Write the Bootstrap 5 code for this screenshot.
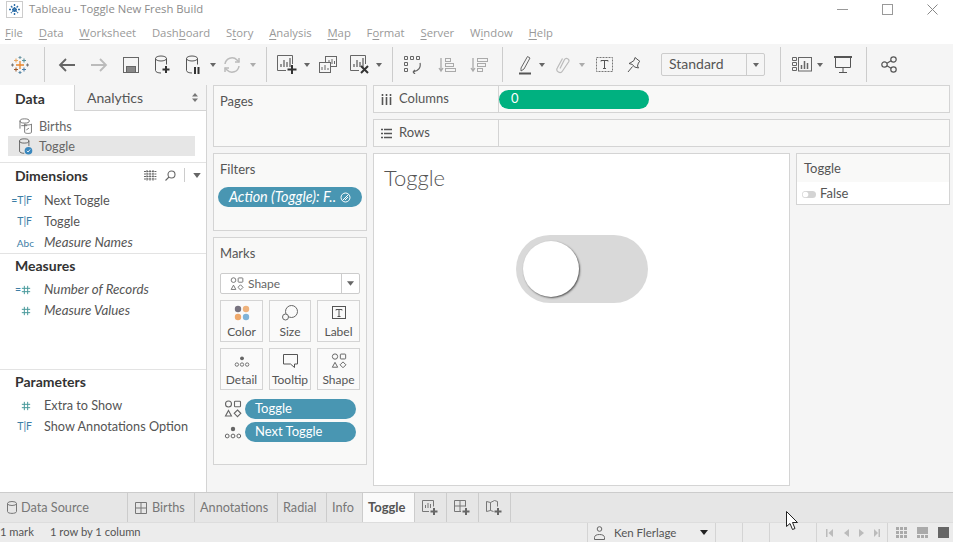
<!DOCTYPE html>
<html lang="en">
<head>
  <meta charset="UTF-8">
  <meta name="viewport" content="width=device-width, initial-scale=1.0">
  <title>Tableau - Toggle New Fresh Build</title>
  <link href="https://cdn.jsdelivr.net/npm/bootstrap@5.3.2/dist/css/bootstrap.min.css" rel="stylesheet">
  <style>
    html, body { height: 100%; }
    body {
      font-family: "Lato", "Liberation Sans", sans-serif;
      font-size: 12.7px;
      color: #555;
      background: #f5f5f5;
      overflow: hidden;
      height: 542px;
      position: relative;
    }
    svg { display: block; }

    .win-title { height: 22px; background: #fff; padding: 0 0 3px 6px; }
    .win-title-text { font-family: "Open Sans", sans-serif; font-size: 11.3px; color: #8c8c8c; margin-left: 6px; }
    .win-btns { margin-left: auto; margin-right: -2px; }
    .win-btn { width: 45px; height: 16px; }
    .menu-bar { height: 22px; background: #fff; padding: 1px 0 0 5px; font-family: "Open Sans", sans-serif; font-size: 11.3px; color: #999; gap: 15.8px; }
    .menu-bar u { text-underline-offset: 2px; }

    .tool-bar { height: 41px; background: #f5f5f5; }
    .tb { height: 41px; flex: none; }
    .w6 { width: 6px; } .w8 { width: 8px; } .w22 { width: 22px; } .w26 { width: 26px; } .w28 { width: 28px; }
    .w30 { width: 30px; } .w32 { width: 32px; } .w34 { width: 34px; } .w36 { width: 36px; } .w38 { width: 38px; }
    .w40 { width: 40px; } .w12 { width: 12px; } .w16 { width: 16px; }
    .tb-sep { width: 1px; height: 35px; background: #ccc; flex: none; }
    .sa { margin-left: 4px; margin-right: 6px; }
    .sb { margin-left: 5px; margin-right: 4px; }
    .sc { margin-left: 9px; margin-right: 4px; }
    .sd { margin-left: 9px; margin-right: 8px; }
    .se { margin-left: 15px; margin-right: 6px; }
    .sf { margin-left: 3px; margin-right: 6px; }
    .fit-select { width: 104px; height: 23px; margin-left: 16px; background: #f5f5f5; border: 1px solid #ccc; border-radius: 2px; font-size: 14px; color: #555; flex: none; }
    .fit-select span { flex: 1; padding: 0 0 2px 7px; }
    .fit-arrow { width: 18px; height: 21px; border-left: 1px solid #ccc; }

    .work-area { height: 407px; }
    .side-panel { width: 207px; background: #fff; border-right: 1px solid #d4d4d4; flex: none; }
    .side-tabs { height: 26px; }
    .tab-data { width: 74px; padding-left: 15px; font-weight: 700; font-size: 14px; color: #333; }
    .tab-analytics { flex: 1; padding-left: 12px; font-size: 14px; background: #f5f5f5; border-left: 1px solid #d4d4d4; border-bottom: 1px solid #d4d4d4; color: #555; }
    .tab-updown { margin-left: auto; margin-right: 8px; }
    .data-list { padding: 5px 11px 0 8px; border-bottom: 1px solid #e3e3e3; box-sizing: content-box; height: 46px; }
    .ds-row { height: 20px; padding: 1px 0 0 9px; gap: 5px; color: #666; }
    .ds-on { background: #e6e6e6; }
    .dim-sec { height: 91px; border-bottom: 1px solid #e3e3e3; }
    .mea-sec { height: 116px; border-bottom: 1px solid #e3e3e3; }
    .sec-head { height: 27px; padding: 0 0 3px 15px; font-size: 14px; font-weight: 700; color: #333; }
    .sec-head-sm { height: 25px; }
    .sec-tools { margin-left: auto; margin-right: 5px; gap: 8px; }
    .sec-rule { width: 1px; height: 14px; background: #ccc; }
    .fld { height: 21px; color: #555; }
    .fld-ic { width: 44px; flex: none; padding-right: 12px; font-size: 10.5px; color: #3d7ea6; line-height: 1; }
    .fld-ic.abc { font-size: 10px; padding-right: 10px; }
    .fld-hash { padding-right: 13px; }
    .fld-it { font-style: italic; font-size: 13.3px; }

    .shelf-col { width: 154px; margin-left: 6px; flex: none; }
    .sh-card { background: #f9f9f8; border: 1px solid #d4d4d4; padding: 7px 6px 0 6px; color: #555; font-size: 13px; }
    .sh-pages { height: 62px; margin-bottom: 6px; }
    .sh-filters { height: 78px; margin-bottom: 6px; }
    .sh-marks { height: 228px; }
    .sh-title { height: 16px; line-height: 16px; }
    .sh-pill { height: 20px; border-radius: 10px; background: #4996b2; color: #fff; padding-left: 10px; }
    .pill-filter { margin: 10px -2px 0 -2px; font-style: italic; font-size: 14.400px; padding-left: 11px; }
    .pill-filter svg { margin-left: auto; margin-right: 11px; }
    .marks-sel { height: 21px; margin: 12px 0 6px 0; background: #fff; border: 1px solid #ccc; border-radius: 2px; font-size: 12px; color: #666; }
    .marks-sel svg { margin-left: 9px; }
    .marks-sel span { margin-left: 4px; }
    .marks-arrow { margin-left: auto; width: 18px; height: 19px; border-left: 1px solid #ccc; }
    .marks-arrow svg { margin-left: 0; }
    .marks-grid { display: grid; grid-template-columns: 43px 42px 43px; column-gap: 6px; row-gap: 6px; }
    .mk-btn { height: 42px; background: #fafafa; border: 1px solid #d4d4d4; font-size: 12px; color: #555; padding-top: 3px; }
    .mk-ic { height: 22px; }
    .mk-lines { margin-top: 9px; gap: 3px; }
    .mk-line { gap: 2px; }
    .mk-line svg { flex: none; width: 18px; margin-left: 4px; margin-right: 1px; }
    .mk-line .sh-pill { width: 111px; }

    .main-col { flex: 1; margin-left: 6px; margin-right: 3px; min-width: 0; font-size: 13px; }
    .shelf-row { height: 28px; margin-bottom: 6px; background: #f9f9f8; border: 1px solid #d4d4d4; }
    .shelf-name { width: 125px; padding-left: 7px; gap: 7px; border-right: 1px solid #d4d4d4; height: 100%; flex: none; }
    .pill-col { width: 150px; height: 19px; border-radius: 10px; background: #00b180; color: #fff; padding-left: 12px; }
    .view-row { gap: 6px; height: 333px; }
    .view-box { width: 417px; background: #fff; border: 1px solid #d4d4d4; flex: none; }
    .view-title { font-size: 22px; font-weight: 300; color: #555; padding: 11px 0 0 10px; line-height: 26px; }
    .tg-track { width: 132px; height: 68px; border-radius: 34px; background: #d9d9d9; margin: 44px 0 0 142px; padding: 6px 7px; }
    .tg-knob { width: 56px; height: 56px; border-radius: 50%; background: #fff; box-shadow: 1px 1px 2px #555; }
    .legend-box { width: 154px; height: 52px; background: #f9f9f8; border: 1px solid #d4d4d4; flex: none; }
    .legend-head { height: 28px; padding: 2px 0 0 7px; }
    .legend-item { height: 22px; background: #fff; padding: 2px 0 0 5px; gap: 4px; }

    .tab-strip { height: 30px; background: #e6e6e6; border-top: 1px solid #ccc; color: #777; }
    .sheet-tab { height: 29px; border-right: 1px solid #ccc; padding: 0 0 0 5px; gap: 5px; flex: none; }
    .t-ds { width: 128px; padding-left: 7px; gap: 4px; } .t-bi { width: 67px; padding-left: 7px; } .t-an { width: 83px; } .t-ra { width: 49px; }
    .t-in { width: 36px; } .t-to { width: 52px; background: #fafafa; color: #555; font-weight: 700; font-size: 13px; }
    .t-new { width: 32px; padding: 0; }
    .status-bar { height: 20px; background: #ececec; border-top: 1px solid #ddd; color: #555; font-size: 11.200px; }
    .st-mark { width: 50px; }
    .st-user { margin-left: auto; width: 129px; height: 100%; border-left: 1px solid #d4d4d4; border-right: 1px solid #d4d4d4; padding-left: 6px; gap: 9px; font-size: 11.500px; flex: none; }
    .st-user svg:last-child { margin-left: auto; margin-right: 7px; }
    .st-cell { width: 27px; height: 100%; border-right: 1px solid #d4d4d4; flex: none; }
    .st-wide { width: 47px; }
    .st-nav { width: 71px; height: 100%; border-right: 1px solid #d4d4d4; padding-left: 9px; flex: none; }
    .st-views { width: 65px; padding-left: 8px; gap: 10px; flex: none; }
    .mouse-ptr { position: absolute; left: 786px; top: 511px; }
  </style>
</head>
<body>
  <svg width="0" height="0" class="position-absolute">
    <defs>
      <symbol id="i-shape" viewBox="0 0 18 18">
        <circle cx="4.5" cy="4" r="3" fill="none" stroke="#666" stroke-width="1.1"/>
        <rect x="10.5" y="1.2" width="6" height="5.5" rx=".8" fill="none" stroke="#666" stroke-width="1.1"/>
        <path d="M4.5 10.5l3 5.5h-6z" fill="none" stroke="#666" stroke-width="1.1"/>
        <path d="M13.5 10l3.3 3.3-3.3 3.3-3.3-3.3z" fill="none" stroke="#666" stroke-width="1.1"/>
      </symbol>
      <symbol id="i-detail" viewBox="0 0 18 18">
        <circle cx="9" cy="6" r="2.2" fill="#666"/>
        <circle cx="3.2" cy="13" r="1.9" fill="none" stroke="#666"/>
        <circle cx="9" cy="13" r="1.9" fill="none" stroke="#666"/>
        <circle cx="14.8" cy="13" r="1.9" fill="none" stroke="#666"/>
      </symbol>
      <symbol id="i-hash" viewBox="0 0 12 12">
        <path d="M4 1v10M8 1v10M1 4h10M1 8h10" stroke="#4a9a9c" stroke-width="1.2" fill="none"/>
      </symbol>
      <symbol id="i-caret" viewBox="0 0 6 4"><path d="M0 0h6L3 4z" fill="#666"/></symbol>
      <symbol id="i-cyl" viewBox="0 0 16 20">
        <ellipse cx="7" cy="3.5" rx="5.5" ry="2.5" fill="none" stroke="#555"/>
        <path d="M1.5 3.5v12c0 1.5 2.500 2.500 5.500 2.500M12.500 3.500v6" fill="none" stroke="#555"/>
      </symbol>
    </defs>
  </svg>

  <header class="win-title d-flex align-items-center">
    <svg width="17" height="17" viewBox="0 0 17 17"><rect x=".5" y=".5" width="16" height="16" fill="#fff" stroke="#ccc"/><path d="M8.500 3v11M3 8.500h11M5 5l7 7M12 5l-7 7" stroke="#2f6fa8" stroke-width="1.4" stroke-dasharray="2 1"/></svg>
    <span class="win-title-text">Tableau - Toggle New Fresh Build</span>
    <div class="win-btns d-flex">
      <div class="win-btn d-flex align-items-center justify-content-center"><svg width="11" height="11"><path d="M0 5.500h11" stroke="#999"/></svg></div>
      <div class="win-btn d-flex align-items-center justify-content-center"><svg width="11" height="11"><rect x=".5" y=".5" width="10" height="10" fill="none" stroke="#999"/></svg></div>
      <div class="win-btn d-flex align-items-center justify-content-center"><svg width="11" height="11"><path d="M.5.500l10 10M10.500.500l-10 10" stroke="#888"/></svg></div>
    </div>
  </header>

  <nav class="menu-bar d-flex align-items-center">
    <span><u>F</u>ile</span><span><u>D</u>ata</span><span><u>W</u>orksheet</span><span>Dash<u>b</u>oard</span><span>S<u>t</u>ory</span><span><u>A</u>nalysis</span><span><u>M</u>ap</span><span>F<u>o</u>rmat</span><span><u>S</u>erver</span><span>W<u>i</u>ndow</span><span><u>H</u>elp</span>
  </nav>

  <div class="tool-bar d-flex align-items-center">
    <div class="tb w40 d-flex align-items-center justify-content-center">
      <svg width="18" height="18" viewBox="0 0 18 18" fill="none" stroke-width="1.100">
        <path d="M9 5v8M5 9h8" stroke="#e8862c" stroke-width="1.300"/><path d="M5 2.500v4M3 4.500h4" stroke="#e9a55c"/><path d="M13 2.500v4M11 4.500h4" stroke="#59939b"/>
        <path d="M5 11.500v4M3 13.500h4" stroke="#9c5a2c"/><path d="M13 11.500v4M11 13.500h4" stroke="#4d7ea8"/>
        <path d="M9 0v3M7.500 1.500h3" stroke="#7099a6"/><path d="M9 15v3M7.500 16.500h3" stroke="#5a8aa8"/>
        <path d="M0 9h3M1.500 7.500v3" stroke="#777"/><path d="M15 9h3M16.500 7.500v3" stroke="#777"/>
      </svg>
    </div>
    <div class="tb-sep sa"></div>
    <div class="tb w32 d-flex align-items-center justify-content-center"><svg width="18" height="14" viewBox="0 0 18 14" fill="none" stroke="#666" stroke-width="1.800"><path d="M17 7H2M8 1L2 7l6 6"/></svg></div>
    <div class="tb w32 d-flex align-items-center justify-content-center"><svg width="18" height="14" viewBox="0 0 18 14" fill="none" stroke="#bbb" stroke-width="1.800"><path d="M1 7h15M10 1l6 6-6 6"/></svg></div>
    <div class="tb w32 d-flex align-items-center justify-content-center"><svg width="16" height="16" viewBox="0 0 16 16" fill="none" stroke="#666"><rect x=".5" y=".5" width="15" height="15"/><rect x="3.500" y="9.500" width="9" height="6" fill="#888"/></svg></div>
    <div class="tb w32 d-flex align-items-center justify-content-center"><svg width="18" height="20" viewBox="0 0 18 20"><use href="#i-cyl" width="16" height="20"/><path d="M12 11v7M8.500 14.500h7" stroke="#333" stroke-width="2"/></svg></div>
    <div class="tb w28 d-flex align-items-center justify-content-center"><svg width="16" height="20" viewBox="0 0 16 20"><use href="#i-cyl" width="16" height="20"/><path d="M10 12v7M13.500 12v7" stroke="#333" stroke-width="2"/></svg></div>
    <div class="tb w12 d-flex align-items-center justify-content-center"><svg width="6" height="4"><use href="#i-caret"/></svg></div>
    <div class="tb w26 d-flex align-items-center justify-content-center"><svg width="18" height="18" viewBox="0 0 18 18" fill="none" stroke="#bbb" stroke-width="1.500"><path d="M2 8a7 7 0 0 1 12-4l2 2M16 10a7 7 0 0 1-12 4l-2-2"/><path d="M16 2v4h-4M2 16v-4h4"/></svg></div>
    <div class="tb w16 d-flex align-items-center justify-content-center"><svg width="6" height="4" opacity=".5"><use href="#i-caret"/></svg></div>
    <div class="tb-sep sb"></div>
    <div class="tb w32 d-flex align-items-center justify-content-center"><svg width="20" height="20" viewBox="0 0 20 20" fill="none" stroke="#666"><path d="M15.500 9V.5H.5v15H9"/><path d="M4 12V9M7 12V5M10 12V7M13 12V3" stroke-width="1.300"/><path d="M15 10v9M10.500 14.500h9" stroke="#333" stroke-width="2"/></svg></div>
    <div class="tb w8 d-flex align-items-center justify-content-center"><svg width="6" height="4"><use href="#i-caret"/></svg></div>
    <div class="tb w34 d-flex align-items-center justify-content-center"><svg width="18" height="17" viewBox="0 0 18 17" fill="none" stroke="#666"><rect x="6.500" y=".5" width="11" height="10" fill="#f5f5f5"/><rect x=".5" y="6.500" width="11" height="10" fill="#f5f5f5"/><path d="M3 14v-3M6 14V9M9 14v-2M10 6V4M13 8V3M15.500 8V5"/></svg></div>
    <div class="tb w30 d-flex align-items-center justify-content-center"><svg width="20" height="20" viewBox="0 0 20 20" fill="none" stroke="#666"><path d="M15.500 9V.5H.5v15H9"/><path d="M4 12V9M7 12V5M10 12V7M13 12V3" stroke-width="1.300"/><path d="M11 11l7 7M18 11l-7 7" stroke="#333" stroke-width="2"/></svg></div>
    <div class="tb w8 d-flex align-items-center justify-content-center"><svg width="6" height="4"><use href="#i-caret"/></svg></div>
    <div class="tb-sep sc"></div>
    <div class="tb w32 d-flex align-items-center justify-content-center"><svg width="18" height="18" viewBox="0 0 18 18" fill="none" stroke="#666"><path d="M.5.500h3v3h-3zM6.500.500h3v3h-3zM12.500.500h3v3h-3zM.5 6.500h3v3h-3zM.5 12.500h3v3h-3z"/><path d="M16 7c1 4-1 8-7 9M9 16l2-2M9 16l2 2" stroke-width="1.200"/></svg></div>
    <div class="tb w36 d-flex align-items-center justify-content-center"><svg width="18" height="16" viewBox="0 0 18 16" fill="none" stroke="#aaa"><path d="M3 1v13M1 11l2 3 2-3" stroke-width="1.300"/><rect x="7.500" y="1.500" width="5" height="3"/><rect x="7.500" y="6.500" width="8" height="3"/><rect x="7.500" y="11.500" width="10" height="3"/></svg></div>
    <div class="tb w28 d-flex align-items-center justify-content-center"><svg width="18" height="16" viewBox="0 0 18 16" fill="none" stroke="#aaa"><path d="M3 1v13M1 11l2 3 2-3" stroke-width="1.300"/><rect x="7.500" y="1.500" width="10" height="3"/><rect x="7.500" y="6.500" width="8" height="3"/><rect x="7.500" y="11.500" width="5" height="3"/></svg></div>
    <div class="tb-sep sd"></div>
    <div class="tb w28 d-flex align-items-center justify-content-center"><svg width="14" height="20" viewBox="0 0 14 20" fill="none"><path d="M3 13L9.500 1.500l2.500 1.500-6 11-3 2z" stroke="#666"/><path d="M1 18.500h12" stroke="#555" stroke-width="2"/></svg></div>
    <div class="tb w6 d-flex align-items-center justify-content-center"><svg width="6" height="4"><use href="#i-caret"/></svg></div>
    <div class="tb w34 d-flex align-items-center justify-content-center"><svg width="15" height="18" viewBox="0 0 15 18" fill="none" stroke="#bbb" stroke-width="1.200"><path d="M5 12.500L9.500 3.500a2.400 2.400 0 0 1 4.200 2.300L7.500 15a3 3 0 0 1-5.200-3L7.500 2.500"/></svg></div>
    <div class="tb w6 d-flex align-items-center justify-content-center"><svg width="6" height="4" opacity=".5"><use href="#i-caret"/></svg></div>
    <div class="tb w38 d-flex align-items-center justify-content-center"><svg width="17" height="15" viewBox="0 0 17 15" fill="none"><rect x=".5" y=".5" width="16" height="14" stroke="#777" stroke-dasharray="2 1"/><path d="M5 4.500V3.500h7v1M8.500 3.500v8M7 11.500h3" stroke="#555"/></svg></div>
    <div class="tb w22 d-flex align-items-center justify-content-center"><svg width="14" height="16" viewBox="0 0 14 16" fill="none" stroke="#555"><path d="M8 .5l5 4-1.500 1-1 3.500 1 2-4-1-2-2.500L2 6.500l2-1 3-2zM5.500 9.500L1 15"/></svg></div>
    <div class="fit-select d-flex align-items-center"><span>Standard</span><div class="fit-arrow d-flex align-items-center justify-content-center"><svg width="6" height="4"><use href="#i-caret"/></svg></div></div>
    <div class="tb-sep se"></div>
    <div class="tb w30 d-flex align-items-center justify-content-center"><svg width="20" height="15" viewBox="0 0 20 15" fill="none" stroke="#666"><path d="M.5.500h4v3h-4zM.5 5.500h4v3h-4zM.5 10.500h4v3h-4z"/><rect x="6.500" y=".5" width="13" height="13.500"/><path d="M9.500 12V8M12.500 12V4M15.500 12V6" stroke-width="1.500"/></svg></div>
    <div class="tb w6 d-flex align-items-center justify-content-center"><svg width="6" height="4"><use href="#i-caret"/></svg></div>
    <div class="tb w40 d-flex align-items-center justify-content-center"><svg width="18" height="17" viewBox="0 0 18 17" fill="none" stroke="#555"><path d="M0 1h18" stroke-width="2"/><path d="M1.500 1v10.500h15V1M9 11.500v5M5 16.500h8"/></svg></div>
    <div class="tb-sep sf"></div>
    <div class="tb w32 d-flex align-items-center justify-content-center"><svg width="16" height="17" viewBox="0 0 16 17" fill="none" stroke="#555" stroke-width="1.200"><circle cx="3.500" cy="8.500" r="2.700"/><circle cx="12.500" cy="3.500" r="2.700"/><circle cx="12.500" cy="13.500" r="2.700"/><path d="M6 7.200l4-2.400M6 9.800l4 2.400"/></svg></div>
  </div>

  <main class="work-area d-flex">
    <aside class="side-panel d-flex flex-column">
      <div class="side-tabs d-flex">
        <div class="tab-data d-flex align-items-center">Data</div>
        <div class="tab-analytics d-flex align-items-center">Analytics
          <svg class="tab-updown" width="6" height="9" viewBox="0 0 6 9"><path d="M0 3.500L3 0l3 3.500zM0 5.500L3 9l3-3.500z" fill="#777"/></svg>
        </div>
      </div>
      <div class="data-list">
        <div class="ds-row d-flex align-items-center">
          <svg width="17" height="17" viewBox="0 0 16 20" fill="none" stroke="#666"><ellipse cx="7" cy="3.500" rx="5.500" ry="2.500"/><path d="M1.500 3.500v9M15 7v10c0 1-6 2-8 0V7c2 2 8 1 8 0z"/><path d="M3 9h7M12 12l-3 2"/></svg>
          <span>Births</span>
        </div>
        <div class="ds-row ds-on d-flex align-items-center">
          <svg width="17" height="17" viewBox="0 0 17 20"><use href="#i-cyl" width="16" height="20"/><circle cx="12" cy="15" r="4.500" fill="#3a87bd"/><path d="M10 15l1.500 1.500L14 13.500" stroke="#fff" fill="none"/></svg>
          <span>Toggle</span>
        </div>
      </div>
      <section class="dim-sec">
        <div class="sec-head d-flex align-items-center">Dimensions
          <div class="sec-tools d-flex align-items-center">
            <svg width="13" height="11" viewBox="0 0 13 11" fill="none" stroke="#666"><path d="M0 1.500h13M0 4h13M0 6.500h13M0 9h13M3 0v11M6 0v11M9 0v11" stroke-dasharray="2 .6"/></svg>
            <svg width="11" height="11" viewBox="0 0 11 11" fill="none" stroke="#666" stroke-width="1.100"><circle cx="6.500" cy="4.500" r="3.500"/><path d="M4 7l-3.500 3.500"/></svg>
            <div class="sec-rule"></div>
            <svg width="8" height="5"><use href="#i-caret" width="8" height="5"/></svg>
          </div>
        </div>
        <div class="fld d-flex align-items-center"><span class="fld-ic text-end">=T|F</span>Next Toggle</div>
        <div class="fld d-flex align-items-center"><span class="fld-ic text-end">T|F</span>Toggle</div>
        <div class="fld d-flex align-items-center fld-it"><span class="fld-ic abc text-end fst-normal">Abc</span>Measure Names</div>
      </section>
      <section class="mea-sec">
        <div class="sec-head sec-head-sm d-flex align-items-center">Measures</div>
        <div class="fld d-flex align-items-center fld-it"><span class="fld-ic fld-hash d-flex justify-content-end align-items-center fst-normal"><span>=</span><svg width="10" height="10"><use href="#i-hash" width="10" height="10"/></svg></span>Number of Records</div>
        <div class="fld d-flex align-items-center fld-it"><span class="fld-ic fld-hash d-flex justify-content-end"><svg width="10" height="10"><use href="#i-hash" width="10" height="10"/></svg></span>Measure Values</div>
      </section>
      <section>
        <div class="sec-head sec-head-sm d-flex align-items-center">Parameters</div>
        <div class="fld d-flex align-items-center"><span class="fld-ic fld-hash d-flex justify-content-end"><svg width="10" height="10"><use href="#i-hash" width="10" height="10"/></svg></span>Extra to Show</div>
        <div class="fld d-flex align-items-center"><span class="fld-ic text-end">T|F</span>Show Annotations Option</div>
      </section>
    </aside>

    <div class="shelf-col">
      <div class="sh-card sh-pages"><div class="sh-title">Pages</div></div>
      <div class="sh-card sh-filters">
        <div class="sh-title">Filters</div>
        <div class="sh-pill pill-filter d-flex align-items-center">Action (Toggle): F..
          <svg width="11" height="11" viewBox="0 0 11 11" fill="none" stroke="#fff"><circle cx="5.500" cy="5.500" r="4.500"/><path d="M2.500 8.500l6-6M5 8l3-3"/></svg>
        </div>
      </div>
      <div class="sh-card sh-marks">
        <div class="sh-title">Marks</div>
        <div class="marks-sel d-flex align-items-center">
          <svg width="14" height="14"><use href="#i-shape" width="14" height="14"/></svg><span>Shape</span>
          <div class="marks-arrow d-flex align-items-center justify-content-center"><svg width="7" height="5"><use href="#i-caret" width="7" height="5"/></svg></div>
        </div>
        <div class="marks-grid">
          <div class="mk-btn d-flex flex-column align-items-center">
            <div class="mk-ic"><svg width="16" height="18" viewBox="0 0 16 18"><circle cx="4" cy="5" r="3.200" fill="#77727f"/><circle cx="12" cy="5" r="3.200" fill="#efb27c"/><circle cx="4" cy="13" r="3.200" fill="#efa96c"/><circle cx="12" cy="13" r="3.200" fill="#7fb3d8"/></svg></div>Color</div>
          <div class="mk-btn d-flex flex-column align-items-center">
            <div class="mk-ic"><svg width="16" height="18" viewBox="0 0 16 18" fill="none" stroke="#666"><circle cx="9.500" cy="7.500" r="6"/><circle cx="3.500" cy="13" r="3" fill="#fafafa"/></svg></div>Size</div>
          <div class="mk-btn d-flex flex-column align-items-center">
            <div class="mk-ic"><svg width="14" height="18" viewBox="0 0 14 18" fill="none" stroke="#555"><rect x=".5" y="2.500" width="13" height="12"/><path d="M4 6.500v-1h6v1M7 5.500v7M5.500 12.500h3"/></svg></div>Label</div>
          <div class="mk-btn d-flex flex-column align-items-center">
            <div class="mk-ic"><svg width="16" height="18"><use href="#i-detail" width="16" height="18"/></svg></div>Detail</div>
          <div class="mk-btn d-flex flex-column align-items-center">
            <div class="mk-ic"><svg width="15" height="18" viewBox="0 0 15 18" fill="none" stroke="#555"><path d="M.5 2.500h14v9.500h-3v3.500l-4-3.500H.5z"/></svg></div>Tooltip</div>
          <div class="mk-btn d-flex flex-column align-items-center">
            <div class="mk-ic"><svg width="16" height="18"><use href="#i-shape" width="16" height="18"/></svg></div>Shape</div>
        </div>
        <div class="mk-lines d-flex flex-column">
          <div class="mk-line d-flex align-items-center"><svg width="18" height="18"><use href="#i-shape" width="18" height="18"/></svg><div class="sh-pill d-flex align-items-center">Toggle</div></div>
          <div class="mk-line d-flex align-items-center"><svg width="18" height="18"><use href="#i-detail" width="18" height="18"/></svg><div class="sh-pill d-flex align-items-center">Next Toggle</div></div>
        </div>
      </div>
    </div>

    <div class="main-col">
      <div class="shelf-row d-flex align-items-center">
        <div class="shelf-name d-flex align-items-center"><svg width="11" height="11" viewBox="0 0 11 11"><path d="M1.500 3v8M5.500 3v8M9.500 3v8M1.500 0v2M5.500 0v2M9.500 0v2" stroke="#555" stroke-width="1.600"/></svg>Columns</div>
        <div class="pill-col d-flex align-items-center">0</div>
      </div>
      <div class="shelf-row d-flex align-items-center">
        <div class="shelf-name d-flex align-items-center"><svg width="11" height="11" viewBox="0 0 11 11"><path d="M3 1.500h8M3 5.500h8M3 9.500h8M0 1.500h2M0 5.500h2M0 9.500h2" stroke="#555" stroke-width="1.600"/></svg>Rows</div>
      </div>
      <div class="view-row d-flex align-items-start">
        <div class="view-box h-100">
          <div class="view-title">Toggle</div>
          <div class="tg-track"><div class="tg-knob"></div></div>
        </div>
        <div class="legend-box">
          <div class="legend-head d-flex align-items-center">Toggle</div>
          <div class="legend-item d-flex align-items-center">
            <svg width="14" height="7" viewBox="0 0 14 7"><rect width="14" height="7" rx="3.500" fill="#d4d4d4"/><circle cx="3.500" cy="3.500" r="2.800" fill="#fff"/></svg>
            False
          </div>
        </div>
      </div>
    </div>
  </main>

  <div class="tab-strip d-flex">
    <div class="sheet-tab t-ds d-flex align-items-center"><svg width="10" height="13" viewBox="0 0 10 13" fill="none" stroke="#777"><ellipse cx="5" cy="2.500" rx="4.500" ry="2"/><path d="M.5 2.500v8c0 2.500 9 2.500 9 0v-8"/></svg>Data Source</div>
    <div class="sheet-tab t-bi d-flex align-items-center"><svg width="12" height="12" viewBox="0 0 12 12" fill="none" stroke="#777"><path d="M.5.500h11v11H.5zM6 .5v11M.5 6h11"/></svg>Births</div>
    <div class="sheet-tab t-an d-flex align-items-center">Annotations</div>
    <div class="sheet-tab t-ra d-flex align-items-center">Radial</div>
    <div class="sheet-tab t-in d-flex align-items-center">Info</div>
    <div class="sheet-tab t-to d-flex align-items-center">Toggle</div>
    <div class="sheet-tab t-new d-flex align-items-center justify-content-center"><svg width="17" height="16" viewBox="0 0 17 16" fill="none" stroke="#777"><path d="M11.500 6.500V.5H.5v11H7"/><path d="M3.500 8V5M6 8V3M8.500 8V4"/><path d="M12 8v7M8.500 11.500h7" stroke="#666" stroke-width="2"/></svg></div>
    <div class="sheet-tab t-new d-flex align-items-center justify-content-center"><svg width="17" height="16" viewBox="0 0 17 16" fill="none" stroke="#777"><path d="M11.500 6.500V.5H.5v11H7M6 .5V11M.5 6h11"/><path d="M12 8v7M8.500 11.500h7" stroke="#666" stroke-width="2"/></svg></div>
    <div class="sheet-tab t-new d-flex align-items-center justify-content-center"><svg width="17" height="16" viewBox="0 0 17 16" fill="none" stroke="#777"><path d="M.5 1.500l4 1 4-2 3 1v5M.5 1.500v10l4-1 3 1M4.500 2.500v8"/><path d="M12 8v7M8.500 11.500h7" stroke="#666" stroke-width="2"/></svg></div>
  </div>

  <footer class="status-bar d-flex align-items-center">
    <span class="st-mark">1 mark</span>
    <span>1 row by 1 column</span>
    <div class="st-user d-flex align-items-center">
      <svg width="11" height="14" viewBox="0 0 11 14" fill="none" stroke="#666"><circle cx="5.500" cy="3" r="2.300"/><path d="M.5 13.500v-2c0-2 2-3 5-3s5 1 5 3v2z"/></svg>
      <span>Ken Flerlage</span>
      <svg width="8" height="5"><path d="M0 0h8L4 5z" fill="#222"/></svg>
    </div>
    <div class="st-cell"></div>
    <div class="st-cell"></div>
    <div class="st-cell st-wide"></div>
    <div class="st-nav d-flex align-items-center">
      <svg width="54" height="8" viewBox="0 0 54 8" fill="#bbb"><path d="M0 0h1.500v8H0zM7 0v8L2.500 4zM23 0v8l-5-4zM33 0v8l5-4zM48 0v8l4-4zM52.500 0H54v8h-1.500z"/></svg>
    </div>
    <div class="st-views d-flex align-items-center">
      <svg width="11" height="11" viewBox="0 0 11 11" fill="#aaa"><path d="M0 0h3v3H0zM4 0h3v3H4zM8 0h3v3H8zM0 4h3v3H0zM4 4h3v3H4zM8 4h3v3H8zM0 8h3v3H0zM4 8h3v3H4zM8 8h3v3H8z"/></svg>
      <svg width="11" height="11" viewBox="0 0 11 11" fill="#aaa"><path d="M0 0h11v7H0zM0 8h3v3H0zM4 8h3v3H4zM8 8h3v3H8z"/></svg>
      <svg width="11" height="11" viewBox="0 0 11 11" fill="#666"><path d="M0 0h11v11H0z"/></svg>
    </div>
  </footer>

  <svg class="mouse-ptr" width="13" height="20" viewBox="0 0 13 20"><path d="M.5.500v15l3.500-3 2.500 6 2.500-1-2.500-6h5z" fill="#fff" stroke="#222"/></svg>

  <script src="https://cdn.jsdelivr.net/npm/bootstrap@5.3.2/dist/js/bootstrap.bundle.min.js"></script>
</body>
</html>
